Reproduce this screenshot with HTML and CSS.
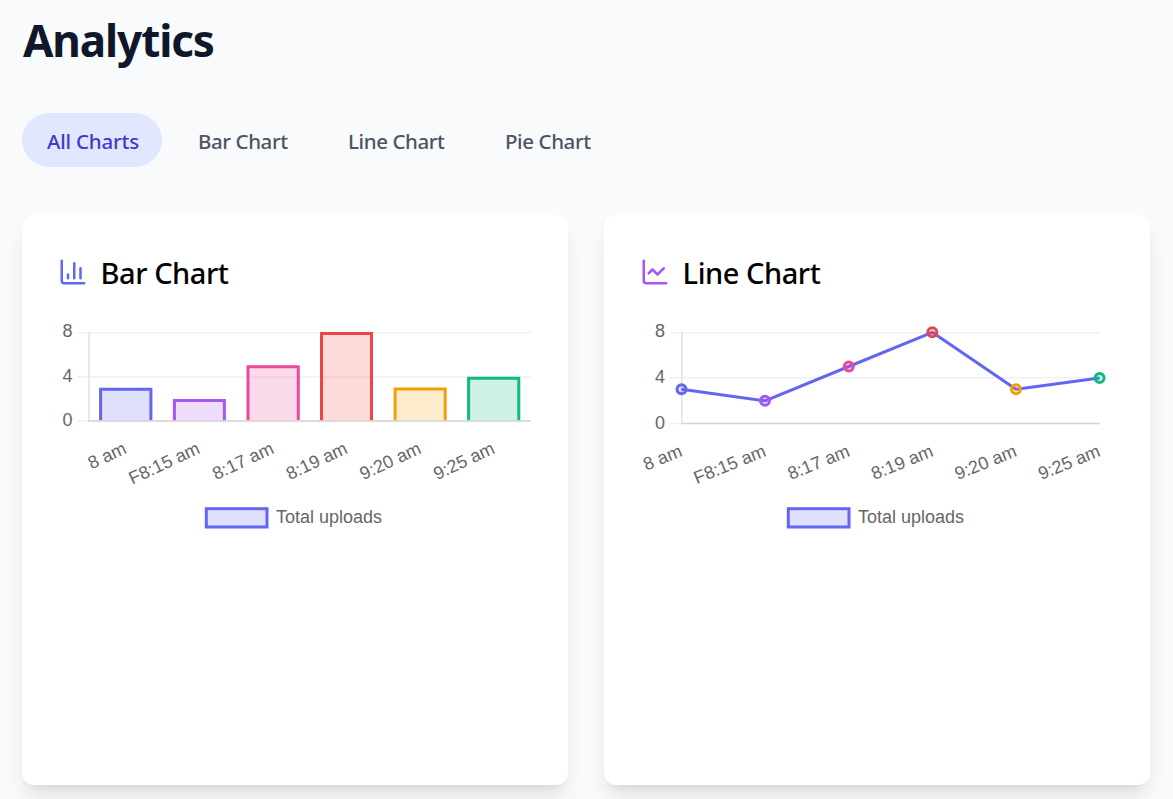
FILE: index.html
```
<!DOCTYPE html>
<html lang="en">
<head>
<meta charset="utf-8">
<title>Analytics</title>
<link rel="stylesheet" href="styles.css">
</head>
<body>
<main class="page">
  <h1 class="title">Analytics</h1>
  <nav class="tabs">
    <a class="tab tab-all active">All Charts</a>
    <a class="tab tab-bar">Bar Chart</a>
    <a class="tab tab-line">Line Chart</a>
    <a class="tab tab-pie">Pie Chart</a>
  </nav>
  <div class="grid">
    <section class="card">
      <h2 class="card-title">
        <svg class="icon indigo" viewBox="0 0 24 24"><path d="M3 3v16a2 2 0 0 0 2 2h16M8 17v-3M13 17V5M18 17V9"/></svg>
        <span class="label">Bar Chart</span>
      </h2>
      <svg class="chart" viewBox="58 314 474 230">
        <g class="gridlines"><path d="M77 332.7H531M77 377H531M77 421H531"/><path class="axis" d="M89 332V421"/></g>
        <g class="bars">
          <path fill="#6366f133" stroke="#6366f1" d="M100.6 420.5V389.3H150.9V420.5"/>
          <path fill="#a855f733" stroke="#a855f7" d="M174.4 420.5V400.5H224.4V420.5"/>
          <path fill="#ec489933" stroke="#ec4899" d="M248 420.5V366.7H298.3V420.5"/>
          <path fill="#ef444433" stroke="#ef4444" d="M321.5 420.5V333.5H371.5V420.5"/>
          <path fill="#f59e0b33" stroke="#f59e0b" d="M395.1 420.5V389H445.2V420.5"/>
          <path fill="#10b98133" stroke="#10b981" d="M468.6 420.5V378.2H518.8V420.5"/>
        </g>
        <path class="baseline" d="M88 421H531"/>
        <g class="ticks">
          <text x="72.5" y="337">8</text><text x="72.5" y="382">4</text><text x="72.5" y="426">0</text>
          <text transform="translate(127.7 452.7) rotate(-25)">8 am</text>
          <text transform="translate(201.2 452.7) rotate(-25)">F8:15 am</text>
          <text transform="translate(275 452.7) rotate(-25)">8:17 am</text>
          <text transform="translate(348.7 452.7) rotate(-25)">8:19 am</text>
          <text transform="translate(422.3 452.7) rotate(-25)">9:20 am</text>
          <text transform="translate(495.9 452.7) rotate(-25)">9:25 am</text>
        </g>
        <rect class="key" x="206.3" y="508.7" width="60.7" height="18.3"/>
        <text class="legend" x="276" y="523">Total uploads</text>
      </svg>
    </section>
    <section class="card">
      <h2 class="card-title">
        <svg class="icon purple" viewBox="0 0 24 24"><path d="M3 3v16a2 2 0 0 0 2 2h16M19 9l-5 5-4-4-3 3"/></svg>
        <span class="label">Line Chart</span>
      </h2>
      <svg class="chart" viewBox="640 314 474 230">
        <g class="gridlines"><path d="M669.5 332.7H1100M669.5 377.7H1100M669.5 423.5H1100"/><path class="axis" d="M681.8 332V423"/></g>
        <path class="baseline" d="M681 423.5H1100"/>
        <path class="line" d="M681.5 389.3L765 400.8L848.8 366.5L932.3 332.3L1016 389.3L1099.6 378"/>
        <g class="points">
          <circle cx="681.5" cy="389.3" r="4.5" fill="#6366f133" stroke="#6366f1"/>
          <circle cx="765" cy="400.8" r="4.5" fill="#a855f733" stroke="#a855f7"/>
          <circle cx="848.8" cy="366.5" r="4.5" fill="#ec489933" stroke="#ec4899"/>
          <circle cx="932.3" cy="332.3" r="4.5" fill="#ef444433" stroke="#ef4444"/>
          <circle cx="1016" cy="389.3" r="4.5" fill="#f59e0b33" stroke="#f59e0b"/>
          <circle cx="1099.6" cy="378" r="4.5" fill="#10b98133" stroke="#10b981"/>
        </g>
        <g class="ticks">
          <text x="665" y="337">8</text><text x="665" y="383">4</text><text x="665" y="429">0</text>
          <text transform="translate(683.3 455.7) rotate(-22)">8 am</text>
          <text transform="translate(767.2 455.7) rotate(-22)">F8:15 am</text>
          <text transform="translate(851 455.7) rotate(-22)">8:17 am</text>
          <text transform="translate(934.5 455.7) rotate(-22)">8:19 am</text>
          <text transform="translate(1018 455.7) rotate(-22)">9:20 am</text>
          <text transform="translate(1101.5 455.7) rotate(-22)">9:25 am</text>
        </g>
        <rect class="key" x="788.3" y="508.7" width="60.7" height="18.3"/>
        <text class="legend" x="858" y="523">Total uploads</text>
      </svg>
    </section>
  </div>
</main>
</body>
</html>
```
FILE: styles.css
```
* { box-sizing: border-box; }
body {
  margin: 0;
  height: 799px;
  overflow: hidden;
  background: #f9fafc;
  font-family: "Noto Sans", "Open Sans", sans-serif;
}
.page { padding: 14px 23px 0 22px; }
.title {
  margin: 0;
  height: 54px;
  padding-left: 1px;
  line-height: 53px;
  font-size: 44px;
  font-weight: 700;
  letter-spacing: -1.1px;
  color: #0f172a;
}
.tabs { display: flex; gap: 12px; margin-top: 45px; }
.tab {
  height: 54px;
  padding-left: 24px;
  line-height: 56px;
  border-radius: 27px;
  font-size: 20.5px;
  font-weight: 500;
  letter-spacing: -0.4px;
  white-space: nowrap;
  color: #4b5563;
}
.active { background: #e0e7ff; color: #4338ca; }
.tab-all { width: 140px; padding-left: 25px; letter-spacing: -0.2px; }
.tab-bar { width: 138px; }
.tab-line { width: 145px; }
.tab-pie { width: 136px; }
.grid {
  display: grid;
  grid-template-columns: 546px 546px;
  gap: 36px;
  margin-top: 48px;
}
.card {
  height: 570px;
  padding: 36px;
  border-radius: 12px;
  background: #fff;
  box-shadow: 0 15px 22.5px -4.5px rgba(0, 0, 0, .1), 0 6px 9px -6px rgba(0, 0, 0, .1);
}
.card-title {
  display: flex;
  align-items: center;
  gap: 12px;
  height: 42px;
  margin: 0 0 21px;
  font-size: 29px;
  font-weight: 500;
  letter-spacing: -0.45px;
  line-height: 42px;
  white-space: nowrap;
  color: #000;
}
.label { padding: 2px 0 0 0.6px; }
.icon {
  width: 30px;
  height: 30px;
  fill: none;
  stroke-width: 2;
  stroke-linecap: round;
  stroke-linejoin: round;
}
.indigo { stroke: #6366f1; }
.purple { stroke: #a855f7; }
.chart { display: block; width: 474px; height: 230px; overflow: visible; }
.gridlines { fill: none; stroke: #f1f1f1; stroke-width: 1.5; }
.axis { stroke: #e3e3e3; }
.baseline { stroke: #d5d5d5; stroke-width: 1.5; }
.bars { stroke-width: 3; }
.line { fill: none; stroke: #6366f1; stroke-width: 3; stroke-linejoin: round; }
.points { stroke-width: 3; }
.ticks, .legend { font-family: "Liberation Sans", Arial, sans-serif; font-size: 18px; fill: #666; }
.ticks { text-anchor: end; }
.key { fill: #6366f133; stroke: #6366f1; stroke-width: 3; }
```
